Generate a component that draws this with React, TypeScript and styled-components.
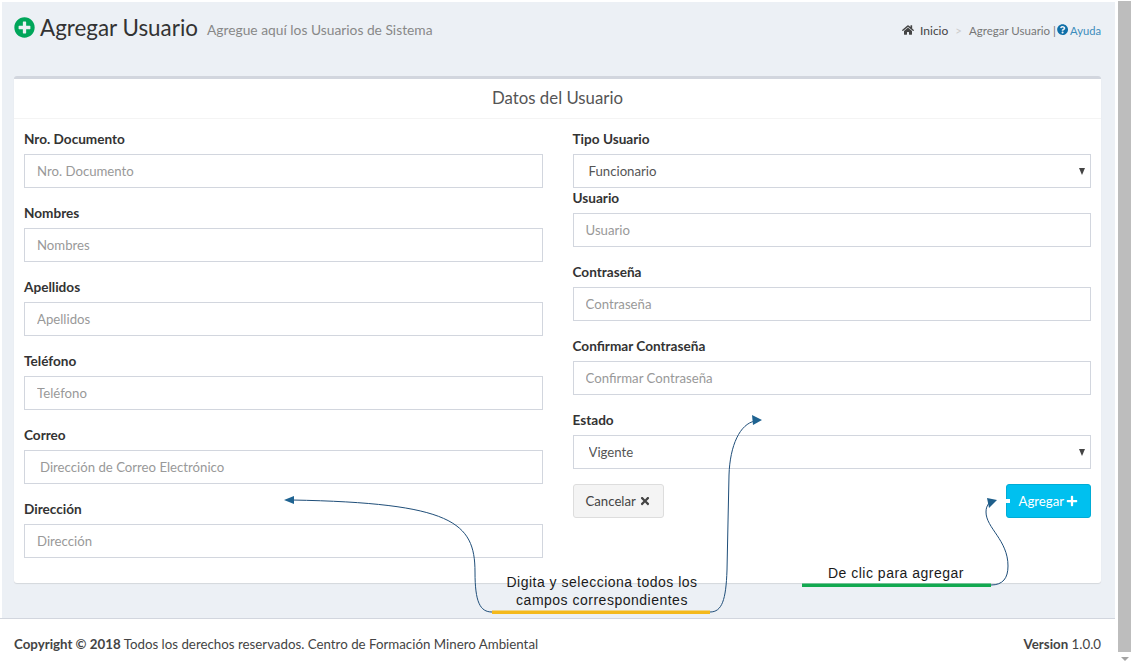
import React from "react";
import styled, { createGlobalStyle } from "styled-components";
import { FaPlusCircle, FaHome, FaQuestionCircle, FaTimes, FaPlus } from "react-icons/fa";

const Global = createGlobalStyle`
  html, body { margin: 0; padding: 0; background: #fff; height: 100%; overflow: hidden; }
  * { box-sizing: border-box; }
  body { font-family: Lato, "Open Sans", sans-serif; font-size: 13.2px; color: #333; }
`;

const Page = styled.div`
  position: relative;
  width: 1134px;
  height: 667px;
  display: flex;
  overflow: hidden;
  background: #fff;
`;
const Main = styled.div`
  width: 1115px;
  display: flex;
  flex-direction: column;
`;
const Content = styled.main`
  height: 616px;
  margin: 2px 0 0 2px;
  padding: 0 14px 0 12px;
  background: #ecf0f5;
`;
const PageHeader = styled.header`
  height: 74px;
  padding-top: 9px;
  display: flex;
  justify-content: space-between;
  align-items: flex-start;
`;
const Title = styled.h1`
  margin: 0;
  display: flex;
  align-items: center;
  font-size: 22.4px;
  font-weight: 400;
  line-height: 28px;
  color: #333;
  svg { color: #00a65a; font-size: 21px; margin: 0 5px 0 0; }
`;
const Subtitle = styled.small`
  font-size: 13.8px;
  color: #888;
  margin-left: 9px;
  padding-top: 5px;
`;
const Breadcrumb = styled.nav`
  display: flex;
  align-items: center;
  height: 12px;
  margin-top: 13px;
  font-size: 11.5px;
  color: #777;
  white-space: pre;
`;
const Crumb = styled.span`
  color: #444;
  font-size: 12px;
  display: inline-flex;
  align-items: center;
  gap: 6px;
`;
const Sep = styled.span`
  color: #ccc;
  margin: 0 7px;
`;
const Help = styled.span`
  color: #3c8dbc;
  font-size: 11.2px;
  margin-left: -2px;
  display: inline-flex;
  align-items: center;
  gap: 2px;
  svg { color: #0f6fa8; }
`;
const Card = styled.section`
  height: 507px;
  background: #fff;
  border-top: 3px solid #d2d6de;
  border-radius: 3px;
  box-shadow: 0 1px 1px rgba(0, 0, 0, 0.1);
`;
const CardHeader = styled.div`
  height: 40px;
  padding-bottom: 3px;
  display: flex;
  align-items: center;
  justify-content: center;
  font-size: 16.8px;
  color: #555;
  border-bottom: 1px solid #f4f4f4;
`;
const CardBody = styled.div`
  padding: 10px;
  display: grid;
  grid-template-columns: 1fr 1fr;
  column-gap: 30px;
`;
const Column = styled.div`
  display: flex;
  flex-direction: column;
`;
const Group = styled.div<{ $tight?: boolean }>`
  margin-bottom: ${(p) => (p.$tight ? 0 : 15)}px;
`;
const Label = styled.label`
  display: block;
  height: 20px;
  line-height: 20px;
  margin-bottom: 5px;
  font-weight: 700;
  font-size: 13.6px;
  color: #333;
`;
const Input = styled.input<{ $indent?: number }>`
  display: block;
  width: 100%;
  height: 34px;
  padding: 0 12px 0 ${(p) => p.$indent ?? 12}px;
  border: 1px solid #d2d6de;
  background: #fff;
  font: inherit;
  color: #555;
  outline: none;
  &::placeholder { color: #999; opacity: 1; }
`;
const SelectWrap = styled.div`
  position: relative;
  &::after {
    content: "";
    position: absolute;
    right: 6px;
    top: 14px;
    border-left: 3.5px solid transparent;
    border-right: 3.5px solid transparent;
    border-top: 7px solid #444;
  }
`;
const Select = styled.select`
  display: block;
  width: 100%;
  height: 34px;
  padding: 0 12px 0 15px;
  border: 1px solid #d2d6de;
  background: #fff;
  font: inherit;
  color: #555;
  outline: none;
  appearance: none;
`;
const Actions = styled.div`
  display: flex;
  justify-content: space-between;
`;
const Button = styled.button<{ $primary?: boolean }>`
  height: 34px;
  display: inline-flex;
  align-items: center;
  gap: ${(p) => (p.$primary ? 2 : 3)}px;
  padding: 0 12px;
  border-radius: 3px;
  font: inherit;
  border: 1px solid ${(p) => (p.$primary ? "#00acd6" : "#ddd")};
  background: ${(p) => (p.$primary ? "#00c0ef" : "#f4f4f4")};
  color: ${(p) => (p.$primary ? "#fff" : "#444")};
`;
const Footer = styled.footer`
  flex: 1;
  border-top: 1px solid #d2d6de;
  background: #fff;
  padding: 1px 14px 0;
  display: flex;
  align-items: center;
  justify-content: space-between;
  font-size: 13.3px;
  color: #444;
  b { font-weight: 700; }
`;
const Scrollbar = styled.div`
  width: 13px;
  margin: 1px 0 0 3px;
  display: flex;
  flex-direction: column;
`;
const Thumb = styled.div`
  height: 651px;
  background: #bdbdbd;
`;
const ScrollArrow = styled.div`
  margin: 5px auto 0;
  border-left: 4px solid transparent;
  border-right: 4px solid transparent;
  border-top: 4px solid #a3a3a3;
`;
const Overlay = styled.svg`
  position: absolute;
  left: 0;
  top: 0;
  pointer-events: none;
`;
const Note = styled.div`
  position: absolute;
  font-family: "Liberation Sans", Arial, sans-serif;
  font-size: 14px;
  line-height: 18px;
  letter-spacing: 0.5px;
  color: #1a1a1a;
  text-align: center;
  white-space: nowrap;
  transform: translateX(-50%);
`;

const left: [string, string, number?][] = [
  ["Nro. Documento", "Nro. Documento"],
  ["Nombres", "Nombres"],
  ["Apellidos", "Apellidos"],
  ["Teléfono", "Teléfono"],
  ["Correo", "Dirección de Correo Electrónico", 15],
  ["Dirección", "Dirección"],
];
const right = [
  ["Usuario", "Usuario"],
  ["Contraseña", "Contraseña"],
  ["Confirmar Contraseña", "Confirmar Contraseña"],
];

export default function App() {
  return (
    <Page>
      <Global />
      <Main>
        <Content>
          <PageHeader>
            <Title>
              <FaPlusCircle />
              Agregar Usuario
              <Subtitle>Agregue aquí los Usuarios de Sistema</Subtitle>
            </Title>
            <Breadcrumb>
              <Crumb>
                <FaHome />
                Inicio
              </Crumb>
              <Sep>&gt;</Sep>
              Agregar Usuario |{" "}
              <Help>
                <FaQuestionCircle />
                Ayuda
              </Help>
            </Breadcrumb>
          </PageHeader>
          <Card>
            <CardHeader>Datos del Usuario</CardHeader>
            <CardBody>
              <Column>
                {left.map(([l, p, indent]) => (
                  <Group key={l}>
                    <Label>{l}</Label>
                    <Input placeholder={p} $indent={indent} />
                  </Group>
                ))}
              </Column>
              <Column>
                <Group $tight>
                  <Label>Tipo Usuario</Label>
                  <SelectWrap>
                    <Select defaultValue="Funcionario">
                      <option>Funcionario</option>
                    </Select>
                  </SelectWrap>
                </Group>
                {right.map(([l, p]) => (
                  <Group key={l}>
                    <Label>{l}</Label>
                    <Input placeholder={p} />
                  </Group>
                ))}
                <Group>
                  <Label>Estado</Label>
                  <SelectWrap>
                    <Select defaultValue="Vigente">
                      <option>Vigente</option>
                    </Select>
                  </SelectWrap>
                </Group>
                <Actions>
                  <Button>
                    Cancelar <FaTimes size={12} />
                  </Button>
                  <Button $primary>
                    Agregar <FaPlus size={12} />
                  </Button>
                </Actions>
              </Column>
            </CardBody>
          </Card>
        </Content>
        <Footer>
          <span>
            <b>Copyright © 2018</b> Todos los derechos reservados. Centro de Formación Minero Ambiental
          </span>
          <span>
            <b>Version</b> 1.0.0
          </span>
        </Footer>
      </Main>
      <Scrollbar>
        <Thumb />
        <ScrollArrow />
      </Scrollbar>
      <Overlay width="1134" height="667" viewBox="0 0 1134 667" fill="none">
        <path d="M492 612 C480 612 475 602 475 572 C475 522 452 503 292 500" stroke="#1f4e79" strokeWidth="1" />
        <polygon points="284,500 294,496 294,504" fill="#1f6391" />
        <path d="M710 612 C722 612 726 600 727 570 L729 475 C730 445 740 424 755 421" stroke="#1f4e79" strokeWidth="1" />
        <polygon points="762,420 752,415 753,425" fill="#1f6391" />
        <path d="M991 585 C1003 585 1008 578 1008 566 C1008 540 986 528 986 512 C986 508 987 506 989 503" stroke="#1f4e79" strokeWidth="1" />
        <polygon points="997,500 987,498 989,508" fill="#1f5f8b" />
        <rect x="492" y="610.5" width="218" height="3.5" fill="#f4b91c" />
        <rect x="802" y="583.5" width="189" height="3.5" fill="#12a950" />
        <rect x="1005" y="499" width="5" height="4" fill="#fff" />
      </Overlay>
      <Note style={{ left: 602, top: 573 }}>
        Digita y selecciona todos los
        <br />
        campos correspondientes
      </Note>
      <Note style={{ left: 896, top: 564 }}>De clic para agregar</Note>
    </Page>
  );
}
